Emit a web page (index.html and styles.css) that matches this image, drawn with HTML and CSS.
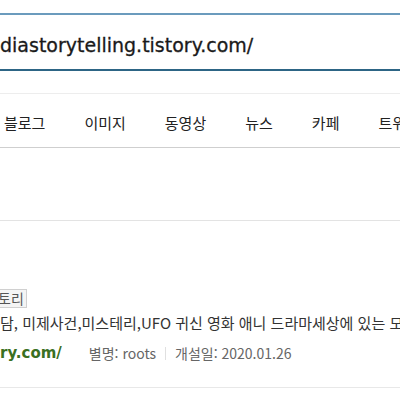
FILE: index.html
```html
<!DOCTYPE html>
<html lang="ko">
<head>
  <meta charset="UTF-8">
  <title>검색 - 블로그</title>
  <link rel="stylesheet" href="styles.css">
</head>
<body>
  <div class="search">
    <span class="search-query">diastorytelling.tistory.com/</span>
  </div>

  <nav class="tabs">
    <a href="#">블로그</a>
    <a href="#">이미지</a>
    <a href="#">동영상</a>
    <a href="#">뉴스</a>
    <a href="#">카페</a>
    <a href="#">트위터</a>
  </nav>

  <div class="spacer"></div>

  <section class="result">
    <span class="badge">토리</span>
    <p class="desc">담, 미제사건,미스테리,UFO 귀신 영화 애니 드라마세상에 있는 모든 이야기</p>
    <div class="meta">
      <span class="link">ry.com/</span>
      <span class="info">별명: roots</span>
      <span class="sep"></span>
      <span class="info">개설일: 2020.01.26</span>
    </div>
  </section>
</body>
</html>
```

FILE: styles.css
```css
body {
  margin: 0;
  background: #fff;
  font-family: "Noto Sans CJK KR", "Liberation Sans", sans-serif;
  color: #222;
  overflow: hidden;
}

.search {
  margin-top: 13px;
  height: 54px;
  border-top: 2px solid #6b9bbd;
  border-bottom: 2px solid #2d6585;
  display: flex;
  align-items: center;
}

.search-query {
  font-family: "DejaVu Sans", sans-serif;
  font-size: 19px;
  color: #1a1a1a;
  white-space: nowrap;
  margin-top: 5px;
  -webkit-text-stroke: 0.3px #1a1a1a;
}

.tabs {
  margin-top: 22px;
  height: 53px;
  border-top: 1px solid #ededed;
  border-bottom: 1px solid #cfcfcf;
  display: flex;
  align-items: center;
  gap: 39px;
  padding-left: 4px;
  white-space: nowrap;
  overflow: hidden;
}

.tabs a {
  color: #222;
  text-decoration: none;
  font-size: 15px;
  line-height: 1;
  padding-top: 4px;
}

.spacer {
  height: 72px;
  border-bottom: 1px solid #e3e3e3;
}

.result {
  padding-top: 64px;
  height: 102px;
  border-bottom: 1px solid #e8e8e8;
  white-space: nowrap;
  overflow: hidden;
}

.badge {
  display: inline-block;
  margin-left: -9px;
  padding: 0 2px 0 6px;
  height: 17px;
  line-height: 17px;
  border: 1px solid #d0d0d0;
  background: #f4f4f4;
  color: #555;
  font-size: 14px;
}

.desc {
  margin: 4px 0 0;
  font-size: 15px;
  line-height: 20px;
  color: #333;
}

.meta {
  margin-top: 10px;
  display: flex;
  align-items: center;
  font-size: 14px;
  line-height: 20px;
}

.link {
  font-family: "DejaVu Sans", sans-serif;
  font-weight: bold;
  font-size: 15px;
  color: #3a7022;
  margin-right: 27px;
}

.info {
  color: #666;
}

.sep {
  width: 1px;
  height: 13px;
  background: #e0e0e0;
  margin: 0 9px;
}
```
